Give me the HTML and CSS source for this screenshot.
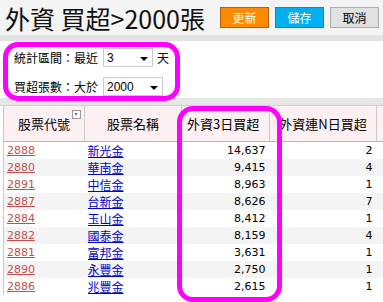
FILE: index.html
```html
<!DOCTYPE html>
<html lang="zh-Hant">
<head>
<meta charset="utf-8">
<link rel="stylesheet" href="styles.css">
</head>
<body>
<div class="page">
  <header class="topbar">
    <h1 class="title">外資 買超&gt;2000張</h1>
    <div class="btns">
      <button class="btn btn-orange">更新</button>
      <button class="btn btn-blue">儲存</button>
      <button class="btn btn-gray">取消</button>
    </div>
  </header>
  <div class="sep"></div>
  <section class="filters">
    <div class="filter-box">
      <div class="frow">
        <span class="lbl">統計區間：最近</span>
        <span class="sel sel-s"><span class="val">3</span><span class="arrow"></span></span>
        <span class="unit">天</span>
      </div>
      <div class="frow">
        <span class="lbl">買超張數：大於</span>
        <span class="sel sel-l"><span class="val">2000</span><span class="arrow"></span></span>
      </div>
    </div>
  </section>
  <div class="band"></div>
  <div class="grid-wrap">
    <table class="grid">
      <colgroup>
        <col class="c1"><col class="c2"><col class="c3"><col class="c4"><col class="c5">
      </colgroup>
      <thead>
        <tr>
          <th class="th-filter">股票代號<span class="ficon"></span></th>
          <th>股票名稱</th>
          <th class="th3">外資3日買超</th>
          <th>外資連N日買超</th>
          <th></th>
        </tr>
      </thead>
      <tbody>
        <tr><td><a class="code">2888</a></td><td><a class="name">新光金</a></td><td class="num">14,637</td><td class="num">2</td><td></td></tr>
        <tr><td><a class="code">2880</a></td><td><a class="name">華南金</a></td><td class="num">9,415</td><td class="num">4</td><td></td></tr>
        <tr><td><a class="code">2891</a></td><td><a class="name">中信金</a></td><td class="num">8,963</td><td class="num">1</td><td></td></tr>
        <tr><td><a class="code">2887</a></td><td><a class="name">台新金</a></td><td class="num">8,626</td><td class="num">7</td><td></td></tr>
        <tr><td><a class="code">2884</a></td><td><a class="name">玉山金</a></td><td class="num">8,412</td><td class="num">1</td><td></td></tr>
        <tr><td><a class="code">2882</a></td><td><a class="name">國泰金</a></td><td class="num">8,159</td><td class="num">4</td><td></td></tr>
        <tr><td><a class="code">2881</a></td><td><a class="name">富邦金</a></td><td class="num">3,631</td><td class="num">1</td><td></td></tr>
        <tr><td><a class="code">2890</a></td><td><a class="name">永豐金</a></td><td class="num">2,750</td><td class="num">1</td><td></td></tr>
        <tr><td><a class="code">2886</a></td><td><a class="name">兆豐金</a></td><td class="num">2,615</td><td class="num">1</td><td></td></tr>
      </tbody>
    </table>
    <div class="col-highlight"></div>
  </div>
</div>
</body>
</html>
```

FILE: styles.css
```css
html, body {
  margin: 0;
  padding: 0;
  background: #ffffff;
}
body {
  width: 383px;
  height: 302px;
  overflow: hidden;
  font-family: "Noto Sans CJK TC", "DejaVu Sans", sans-serif;
  color: #000;
}
.page {
  width: 383px;
  height: 302px;
  overflow: hidden;
}
.topbar {
  height: 35px;
  background: #f4f4f4;
  display: flex;
  align-items: center;
  justify-content: space-between;
  padding: 0 4px 0 5px;
  box-sizing: border-box;
}
.title {
  margin: 0;
  font-weight: normal;
  font-size: 25px;
  line-height: 30px;
  font-family: "Noto Sans CJK TC", sans-serif;
  color: #111;
  white-space: nowrap;
}
.btns {
  display: flex;
  gap: 6px;
  margin-top: -1px;
}
.btn {
  width: 49px;
  height: 21px;
  padding: 0;
  font-size: 12px;
  font-family: "Noto Sans CJK TC", sans-serif;
  line-height: 19px;
  border: 1px solid #8a8a8a;
  border-radius: 0;
}
.btn-orange {
  background: #ff8a00;
  color: #fff;
  border-color: #b06010;
}
.btn-blue {
  background: #00b0f0;
  color: #fff;
  border-color: #1a85b0;
}
.btn-gray {
  background: #e1e1e1;
  color: #000;
  border-color: #adadad;
}
.sep {
  height: 6px;
  background: #e3e3e3;
}
.filters {
  height: 57px;
  background: #fff;
  padding: 1px 0 0 3px;
  box-sizing: border-box;
}
.filter-box {
  width: 177px;
  height: 59px;
  box-sizing: border-box;
  border: 5px solid #ff00ff;
  border-radius: 15px;
  padding: 1px 0 0 6px;
  display: flex;
  flex-direction: column;
  gap: 10px;
  position: relative;
  z-index: 2;
}
.frow {
  display: flex;
  align-items: center;
  height: 19px;
  font-size: 12px;
}
.lbl {
  width: 89px;
  white-space: nowrap;
}
.sel {
  height: 19px;
  box-sizing: border-box;
  border: 1px solid #c8c8c8;
  background: #fff;
  display: flex;
  align-items: center;
  justify-content: space-between;
  padding: 0 4px 0 3px;
  font-family: "Liberation Sans", sans-serif;
  font-size: 12px;
}
.sel-s { width: 50px; }
.sel-l { width: 60px; }
.arrow {
  width: 0;
  height: 0;
  border-left: 4px solid transparent;
  border-right: 4px solid transparent;
  border-top: 4px solid #000;
  margin-top: 2px;
}
.unit {
  margin-left: 4px;
}
.band {
  height: 7px;
  background: #e6e6e6;
  border-bottom: 1px solid #cfcfcf;
}
.grid-wrap {
  position: relative;
  padding-left: 3px;
}
.grid {
  border-collapse: collapse;
  table-layout: fixed;
  width: 440px;
}
.c1 { width: 81px; }
.c2 { width: 97px; }
.c3 { width: 88px; }
.c4 { width: 107px; }
.c5 { width: 67px; }
.grid th {
  height: 35px;
  background: #fdf0f3;
  border-left: 1px solid #c9c9c9;
  border-right: 1px solid #c9c9c9;
  border-bottom: 1px solid #b8b8b8;
  font-weight: normal;
  font-size: 13px;
  font-family: "Noto Sans CJK TC", "DejaVu Sans", sans-serif;
  padding: 0;
  text-align: center;
  white-space: nowrap;
}
.grid th.th3 {
  text-align: left;
  padding-left: 5px;
}
.th-filter {
  position: relative;
}
.ficon {
  position: absolute;
  right: 3px;
  top: 4px;
  width: 7px;
  height: 7px;
  border: 1px solid #999;
  background: #fff;
}
.ficon::after {
  content: "";
  position: absolute;
  left: 1px;
  top: 2px;
  border-left: 2.5px solid transparent;
  border-right: 2.5px solid transparent;
  border-top: 3px solid #888;
}
.grid tbody tr {
  height: 17px;
}
.grid td {
  height: 17px;
  padding: 0 3px;
  font-size: 11px;
  line-height: 17px;
  font-family: "DejaVu Sans", "Noto Sans CJK TC", sans-serif;
  white-space: nowrap;
  overflow: hidden;
  vertical-align: middle;
}
.grid td:first-child {
  border-left: 1px solid #c9c9c9;
  padding-left: 3px;
}
.grid tbody tr:nth-child(even) td {
  background: #f4f4f4;
}
.num {
  text-align: right;
}
.grid td.num {
  padding-right: 4px;
}
.code,
.name {
  display: inline-block;
  height: 17px;
  line-height: 17px;
  vertical-align: top;
  text-decoration: underline;
}
.code {
  color: #c0504d;
}
.name {
  color: #0000cc;
  font-family: "Noto Sans CJK TC", sans-serif;
  font-size: 12px;
  overflow: hidden;
}
.col-highlight {
  position: absolute;
  left: 177px;
  top: 0;
  width: 105px;
  height: 196px;
  box-sizing: border-box;
  border: 5px solid #ff00ff;
  border-radius: 16px;
  pointer-events: none;
}
```
